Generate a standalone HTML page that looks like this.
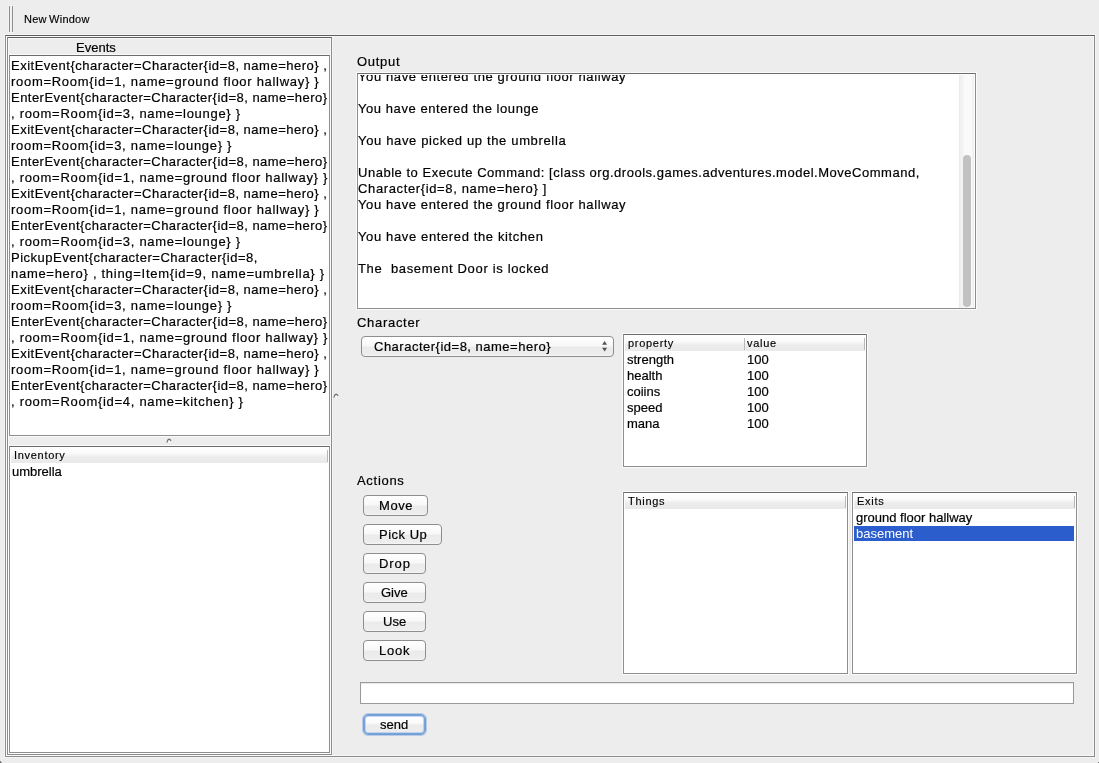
<!DOCTYPE html>
<html><head><meta charset="utf-8">
<style>
html,body{margin:0;padding:0}
body{width:1099px;height:763px;overflow:hidden;position:relative;background:#ededed;font-family:"Liberation Sans",sans-serif;color:#000}
.a{position:absolute}
.t{position:absolute;white-space:pre;font-size:13px;line-height:16px;letter-spacing:.5px;will-change:transform;-webkit-text-stroke-width:.2px}
.t i{font-style:normal;display:block;height:16px}
.w{letter-spacing:.71px}
.s{position:absolute;white-space:pre;font-size:11px;line-height:14px;letter-spacing:.3px;will-change:transform;-webkit-text-stroke-width:.15px}
.etch{position:absolute;box-sizing:border-box;border:1px solid #8c8c8c;border-top-color:#5e5e5e;box-shadow:0 0 0 1px rgba(255,255,255,.45),inset 0 0 0 1px rgba(255,255,255,.6)}
.box{position:absolute;box-sizing:border-box;border:1px solid #8e8e8e;border-top-color:#6a6a6a;background:#fff;overflow:hidden;box-shadow:0 0 0 1px rgba(255,255,255,.75)}
.hdr{position:absolute;height:16px;background:linear-gradient(#ffffff 0%,#fbfbfb 38%,#ececec 62%,#e9e9e9 100%)}
.hdiv{position:absolute;width:1px;background:#b8b8b8}
.btn{position:absolute;box-sizing:border-box;height:21px;border:1px solid #8e8e8e;border-radius:4px;background:linear-gradient(#ffffff 0%,#f8f8f8 45%,#ebebeb 55%,#ededed 90%,#f6f6f6 100%)}
.sep{position:absolute;width:1px;background:#8c8c8c;box-shadow:0 0 0 1px rgba(255,255,255,.35)}
</style></head><body>

<!-- toolbar -->
<div class="sep" style="left:9px;top:6px;height:26px"></div>
<div class="sep" style="left:12px;top:6px;height:26px"></div>
<div class="s" style="left:24px;top:12px;letter-spacing:.25px;word-spacing:-1px">New Window</div>

<!-- split pane outer -->
<div class="etch" style="left:5px;top:35px;width:1090px;height:722px"></div>
<!-- left pane -->
<div class="etch" style="left:7px;top:37px;width:325px;height:718px"></div>
<div class="t" style="left:76px;top:40px;letter-spacing:0">Events</div>

<div class="box" style="left:9px;top:55px;width:321px;height:381px">
<div class="t" style="left:1px;top:2px"><i>ExitEvent{character=Character{id=8, name=hero} ,</i><i class="w">room=Room{id=1, name=ground floor hallway} }</i><i style="letter-spacing:.47px">EnterEvent{character=Character{id=8, name=hero}</i><i class="w">, room=Room{id=3, name=lounge} }</i><i>ExitEvent{character=Character{id=8, name=hero} ,</i><i class="w">room=Room{id=3, name=lounge} }</i><i style="letter-spacing:.47px">EnterEvent{character=Character{id=8, name=hero}</i><i class="w">, room=Room{id=1, name=ground floor hallway} }</i><i>ExitEvent{character=Character{id=8, name=hero} ,</i><i class="w">room=Room{id=1, name=ground floor hallway} }</i><i style="letter-spacing:.47px">EnterEvent{character=Character{id=8, name=hero}</i><i class="w">, room=Room{id=3, name=lounge} }</i><i>PickupEvent{character=Character{id=8,</i><i class="w">name=hero} , thing=Item{id=9, name=umbrella} }</i><i>ExitEvent{character=Character{id=8, name=hero} ,</i><i class="w">room=Room{id=3, name=lounge} }</i><i style="letter-spacing:.47px">EnterEvent{character=Character{id=8, name=hero}</i><i class="w">, room=Room{id=1, name=ground floor hallway} }</i><i>ExitEvent{character=Character{id=8, name=hero} ,</i><i class="w">room=Room{id=1, name=ground floor hallway} }</i><i style="letter-spacing:.47px">EnterEvent{character=Character{id=8, name=hero}</i><i class="w">, room=Room{id=4, name=kitchen} }</i></div>
</div>

<div class="box" style="left:9px;top:446px;width:321px;height:307px">
<div class="hdr" style="left:1px;top:0px;width:317px"></div>
<div class="hdiv" style="left:317px;top:3px;height:12px"></div>
<div class="s" style="left:4px;top:1px;letter-spacing:.7px">Inventory</div>
<div class="t" style="left:2px;top:17px;letter-spacing:0">umbrella</div>
</div>

<svg class="a" style="left:166px;top:438px" width="6" height="6" viewBox="0 0 6 6"><path d="M0.9 4.6 Q1.2 1.6 3 1.1 Q4.6 1.4 5 3" fill="none" stroke="#5a5a5a" stroke-width="1.1" opacity=".85"/><circle cx="3.3" cy="4.3" r="1" fill="#fafafa"/></svg>
<svg class="a" style="left:333px;top:393px" width="6" height="6" viewBox="0 0 6 6"><path d="M0.9 4.6 Q1.2 1.6 3 1.1 Q4.6 1.4 5 3" fill="none" stroke="#5a5a5a" stroke-width="1.1" opacity=".85"/><circle cx="3.3" cy="4.3" r="1" fill="#fafafa"/></svg>
<!-- right pane -->
<div class="t" style="left:357px;top:54px;letter-spacing:.7px">Output</div>
<div class="box" style="left:357px;top:73px;width:619px;height:236px">
<div class="a" style="left:0;top:1px;width:600px;height:232px;overflow:hidden"><div class="t" style="left:0px;top:-6px"><i style="letter-spacing:0.61px">You have entered the ground floor hallway</i><i></i><i style="letter-spacing:0.565px">You have entered the lounge</i><i></i><i style="letter-spacing:0.65px">You have picked up the umbrella</i><i></i><i style="letter-spacing:0.52px">Unable to Execute Command: [class org.drools.games.adventures.model.MoveCommand,</i><i style="letter-spacing:0.63px">Character{id=8, name=hero} ]</i><i style="letter-spacing:0.61px">You have entered the ground floor hallway</i><i></i><i style="letter-spacing:0.63px">You have entered the kitchen</i><i></i><i style="letter-spacing:0.66px">The  basement Door is locked</i></div></div>
<div class="a" style="left:601px;top:1px;width:15px;height:233px;background:linear-gradient(90deg,#e6e6e6 0,#f0f0f0 1px,#f3f3f3 4px,#fafafa 5px,#fafafa 13px,#efefef 14px)"></div>
<div class="a" style="left:605px;top:81px;width:8px;height:152px;border-radius:4px;background:#c2c2c2"></div>
</div>

<div class="t" style="left:357px;top:315px;letter-spacing:.7px">Character</div>
<div class="btn" style="left:361px;top:336px;width:253px"></div>
<div class="t" style="left:374px;top:339px">Character{id=8, name=hero}</div>
<svg class="a" style="left:600px;top:339px" width="10" height="15" viewBox="0 0 10 15"><path d="M2.1 5.8 L4.6 2 L7.1 5.8 Z M2.1 8.8 L4.6 12.6 L7.1 8.8 Z" fill="#555"/></svg>

<div class="box" style="left:623px;top:334px;width:244px;height:133px">
<div class="hdr" style="left:1px;top:0px;width:240px"></div>
<div class="hdiv" style="left:120px;top:3px;height:12px"></div>
<div class="hdiv" style="left:240px;top:3px;height:12px"></div>
<div class="s" style="left:4px;top:1px;letter-spacing:.7px">property</div>
<div class="s" style="left:123px;top:1px;letter-spacing:.7px">value</div>
<div class="t" style="left:3px;top:17px;letter-spacing:0">strength
health
coiins
speed
mana</div>
<div class="t" style="left:123px;top:17px;letter-spacing:0">100
100
100
100
100</div>
</div>

<div class="t" style="left:357px;top:473px;letter-spacing:.7px">Actions</div>
<div class="btn" style="left:363px;top:495px;width:65px"></div><div class="t" style="left:379px;top:498px;letter-spacing:.6px">Move</div>
<div class="btn" style="left:363px;top:524px;width:79px"></div><div class="t" style="left:379px;top:527px;letter-spacing:.5px">Pick Up</div>
<div class="btn" style="left:363px;top:553px;width:63px"></div><div class="t" style="left:379px;top:556px;letter-spacing:.9px">Drop</div>
<div class="btn" style="left:363px;top:582px;width:63px"></div><div class="t" style="left:381px;top:585px;letter-spacing:0">Give</div>
<div class="btn" style="left:363px;top:611px;width:63px"></div><div class="t" style="left:383px;top:614px;letter-spacing:0">Use</div>
<div class="btn" style="left:363px;top:640px;width:63px"></div><div class="t" style="left:379px;top:643px;letter-spacing:.8px">Look</div>

<div class="box" style="left:623px;top:492px;width:225px;height:182px">
<div class="hdr" style="left:1px;top:0px;width:221px"></div>
<div class="hdiv" style="left:221px;top:3px;height:12px"></div>
<div class="s" style="left:4px;top:1px;letter-spacing:.7px">Things</div>
</div>

<div class="box" style="left:852px;top:492px;width:225px;height:182px">
<div class="hdr" style="left:1px;top:0px;width:221px"></div>
<div class="hdiv" style="left:221px;top:3px;height:12px"></div>
<div class="s" style="left:4px;top:1px;letter-spacing:.7px">Exits</div>
<div class="t" style="left:3px;top:17px;letter-spacing:0">ground floor hallway</div>
<div class="a" style="left:1px;top:33px;width:220px;height:15px;background:#2b5dcd"></div>
<div class="t" style="left:3px;top:33px;color:#fff;letter-spacing:0;-webkit-text-stroke-width:0">basement</div>
</div>

<div class="a" style="left:360px;top:682px;width:714px;height:22px;box-sizing:border-box;border:1px solid #9a9a9a;background:#fff;box-shadow:inset 0 1px 1px rgba(0,0,0,.1)"></div>

<div class="a" style="left:363px;top:714px;width:63px;height:21px;box-sizing:border-box;border-radius:5px;border:1px solid #6d9dd5;box-shadow:0 0 0 1px rgba(122,166,222,.45),inset 0 0 0 1px rgba(110,155,214,.85),inset 0 0 0 2px rgba(170,198,236,.7);background:linear-gradient(#ffffff 0%,#fbfbfb 40%,#ececec 55%,#ededed 90%,#f3f3f3 100%)"></div>
<div class="t" style="left:380px;top:717px;letter-spacing:0">send</div>

<div class="a" style="left:0;top:761px;width:1px;height:2px;background:#777"></div><div class="a" style="left:1px;top:762px;width:1px;height:1px;background:#999"></div><div class="a" style="left:1098px;top:762px;width:1px;height:1px;background:#7a7a7a"></div>
</body></html>
